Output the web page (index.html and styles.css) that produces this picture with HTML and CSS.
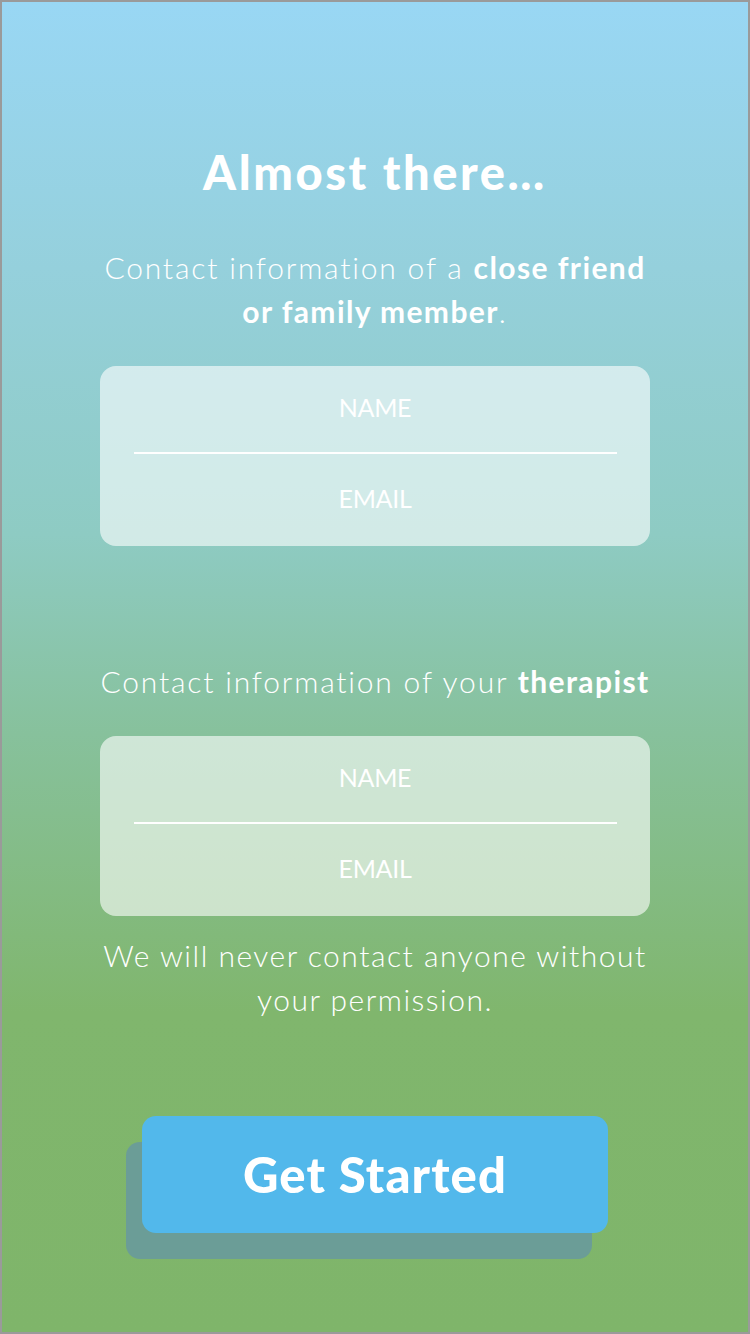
FILE: index.html
```html
<!DOCTYPE html>
<html lang="en">
<head>
<meta charset="utf-8">
<title>Almost there</title>
<link rel="stylesheet" href="styles.css">
</head>
<body>
<main class="screen">
  <h1 class="title">Almost there…</h1>
  <p class="lead lead-first">Contact information of a <b>close friend<br>or family member</b>.</p>
  <section class="card">
    <div class="field field-top">NAME</div>
    <div class="divider"></div>
    <div class="field field-bottom">EMAIL</div>
  </section>
  <p class="lead lead-second">Contact information of your <b>therapist</b></p>
  <section class="card">
    <div class="field field-top">NAME</div>
    <div class="divider"></div>
    <div class="field field-bottom">EMAIL</div>
  </section>
  <p class="lead lead-note">We will never contact anyone without<br>your permission.</p>
  <button class="cta" type="button">Get Started</button>
</main>
</body>
</html>
```

FILE: styles.css
```css
* { box-sizing: border-box; }
html, body { margin: 0; padding: 0; }
body { width: 750px; height: 1334px; font-family: "Lato", "Noto Sans", sans-serif; color: #fff; }

.screen {
  width: 750px;
  height: 1334px;
  border: 2px solid #9a9a9a;
  background: linear-gradient(180deg, #99d7f4 0%, #95d0dc 20%, #8ecbc3 40%, #87c19c 55%, #80b66d 76%, #7fb56a 100%);
  display: flex;
  flex-direction: column;
  align-items: center;
  padding-top: 143px;
}

.title {
  margin: 0;
  font-size: 47px;
  line-height: 54px;
  font-weight: 900;
  letter-spacing: 2.6px;
}

.lead {
  margin: 0;
  font-size: 30px;
  line-height: 44px;
  font-weight: 300;
  letter-spacing: 1.5px;
  text-align: center;
}
.lead b { font-weight: 700; letter-spacing: 1.4px; }
.lead-first { margin-top: 46px; letter-spacing: 1.8px; }
.lead-second { margin-top: 113px; letter-spacing: 1.8px; }
.lead-note { margin-top: 17px; }

.card {
  width: 550px;
  height: 180px;
  margin-top: 33px;
  border-radius: 16px;
  background: rgba(255, 255, 255, 0.6);
  display: flex;
  flex-direction: column;
}
.field {
  display: flex;
  align-items: center;
  justify-content: center;
  font-size: 25px;
  font-weight: 400;
  letter-spacing: -0.3px;
}
.field-top { height: 86px; padding-bottom: 5px; }
.field-bottom { height: 92px; padding-bottom: 4px; }
.divider { height: 2px; margin: 0 33px 0 34px; background: #fff; }

.cta {
  margin-top: 95px;
  width: 466px;
  height: 117px;
  border: 0;
  border-radius: 14px;
  background: #52b8eb;
  box-shadow: -16px 26px 0 #6b9d97;
  color: #fff;
  font-family: "Lato", "Noto Sans", sans-serif;
  font-size: 49px;
  font-weight: 900;
  letter-spacing: 1.1px;
  padding: 0 0 2px;
}
```
